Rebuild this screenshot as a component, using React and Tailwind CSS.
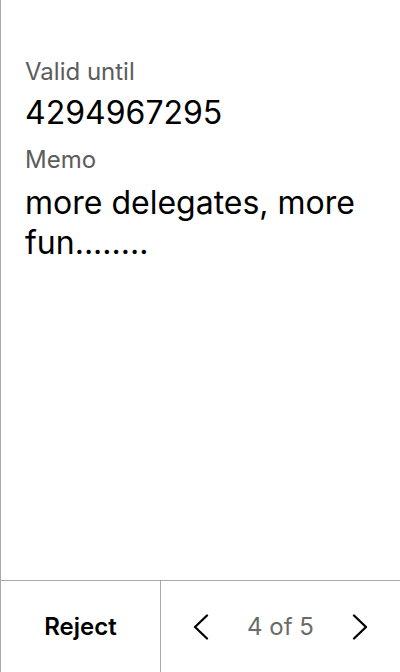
function Chevron({ dir }) {
  return (
    <svg width="16" height="26" viewBox="0 0 16 26" fill="none" stroke="black" strokeWidth="2.3" strokeLinecap="round" strokeLinejoin="round">
      {dir === 'left' ? <path d="M14 1.5 2 13l12 11.5" /> : <path d="M2 1.5 14 13 2 24.5" />}
    </svg>
  );
}

export default function App() {
  return (
    <div className="h-[672px] w-[400px] bg-white border-l border-[#a8a8a8] flex flex-col" style={{ fontFamily: 'Inter, "Noto Sans", sans-serif' }}>
      <div className="flex-1 px-6 pt-[57px]">
        <p className="text-[24px] leading-[30px] text-[#5c5c5c]">Valid until</p>
        <p className="text-[32px] leading-[40px] text-black mt-[6px]">4294967295</p>
        <p className="text-[24px] leading-[30px] text-[#5c5c5c] mt-[12px]">Memo</p>
        <p className="text-[32px] leading-[40px] text-black mt-[8px]">more delegates, more fun........</p>
      </div>
      <div className="h-[92px] border-t border-[#a8a8a8] flex">
        <button className="w-[160px] border-r border-[#a8a8a8] text-[24px] font-semibold text-black flex items-center justify-center">
          Reject
        </button>
        <div className="flex-1 flex items-center justify-between px-8">
          <Chevron dir="left" />
          <span className="text-[24px] text-[#6b6b6b]">4 of 5</span>
          <Chevron dir="right" />
        </div>
      </div>
    </div>
  );
}
